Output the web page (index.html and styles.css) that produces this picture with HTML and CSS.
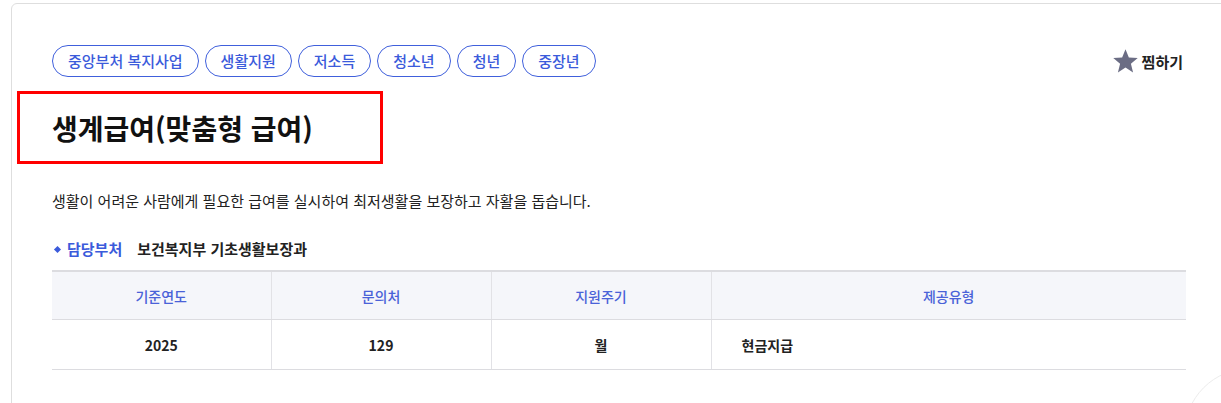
FILE: index.html
```html
<!DOCTYPE html>
<html lang="ko">
<head>
<meta charset="utf-8">
<title>생계급여(맞춤형 급여)</title>
<link rel="stylesheet" href="styles.css">
</head>
<body>
<div class="card">
  <div class="top-row">
    <ul class="tags">
      <li class="tag">중앙부처 복지사업</li>
      <li class="tag">생활지원</li>
      <li class="tag">저소득</li>
      <li class="tag">청소년</li>
      <li class="tag">청년</li>
      <li class="tag">중장년</li>
    </ul>
    <button class="fav" type="button">
      <svg class="star" viewBox="0 0 24 24" width="27" height="26" aria-hidden="true">
        <path d="M12 1.2l3.1 7.6 8.2.5-6.3 5.2 2 8-7-4.4-7 4.4 2-8L.7 9.3l8.2-.5z" fill="#6b6d84"/>
      </svg>
      <span>찜하기</span>
    </button>
  </div>
  <div class="title-wrap">
    <h1 class="title">생계급여(맞춤형 급여)</h1>
    <div class="highlight"></div>
  </div>
  <p class="desc">생활이 어려운 사람에게 필요한 급여를 실시하여 최저생활을 보장하고 자활을 돕습니다.</p>
  <div class="dept">
    <span class="dot"></span>
    <span class="dept-label">담당부처</span>
    <span class="dept-name">보건복지부 기초생활보장과</span>
  </div>
  <table class="info">
    <colgroup>
      <col class="c1"><col class="c2"><col class="c3"><col class="c4">
    </colgroup>
    <thead>
      <tr><th>기준연도</th><th>문의처</th><th>지원주기</th><th>제공유형</th></tr>
    </thead>
    <tbody>
      <tr><td>2025</td><td>129</td><td>월</td><td class="left">현금지급</td></tr>
    </tbody>
  </table>
  <div class="deco"></div>
</div>
</body>
</html>
```

FILE: styles.css
```css
html, body {
  margin: 0;
  padding: 0;
  background: #fff;
}
body {
  overflow: hidden;
  font-family: "Noto Sans CJK KR", "Noto Sans", sans-serif;
  color: #222;
}
.card {
  position: relative;
  margin: 3px 0 0 11px;
  width: 1134px;
  padding: 41px 40px 40px 40px;
  border: 1px solid #dedede;
  border-radius: 6px;
  background: #fff;
}
.top-row {
  display: flex;
  justify-content: space-between;
  align-items: center;
}
.tags {
  display: flex;
  gap: 6px;
  list-style: none;
  margin: 0;
  padding: 0;
}
.tag {
  height: 30px;
  line-height: 29px;
  padding: 0 15px;
  border: 1px solid #4060dc;
  border-radius: 16px;
  color: #3b5bdb;
  font-size: 15px;
  font-weight: 500;
  box-sizing: content-box;
}
.fav {
  display: flex;
  align-items: center;
  gap: 3px;
  margin-right: 3px;
  padding: 0;
  border: 0;
  background: none;
  font-family: inherit;
  font-size: 15px;
  font-weight: 700;
  color: #222;
}
.star { display: block; }
.title-wrap {
  position: relative;
  margin-top: 31px;
}
.title {
  margin: 0;
  font-size: 28px;
  line-height: 40px;
  font-weight: 700;
  color: #111;
}
.highlight {
  position: absolute;
  left: -35px;
  top: -17px;
  width: 360px;
  height: 67px;
  border: 3px solid #f00;
}
.desc {
  margin: 42px 0 0;
  font-size: 15px;
  line-height: 22px;
  color: #222;
}
.dept {
  display: flex;
  align-items: center;
  margin-top: 26px;
  font-size: 15px;
  line-height: 22px;
  font-weight: 700;
}
.dot {
  width: 5px;
  height: 5px;
  margin: 0 7px 0 3px;
  background: #3b5bdb;
  transform: rotate(45deg);
}
.dept-label {
  color: #3b5bdb;
  margin-right: 15px;
}
.dept-name { color: #222; }
.info {
  margin-top: 10px;
  width: 1134px;
  border-collapse: collapse;
  table-layout: fixed;
  font-size: 14px;
}
.c1 { width: 219px; }
.c2 { width: 220px; }
.c3 { width: 220px; }
.c4 { width: 475px; }
.info th, .info td {
  padding: 0;
  text-align: center;
  border-top: 1px solid #dcdce0;
  border-bottom: 1px solid #dcdce0;
  border-left: 1px solid #e2e2e6;
}
.info th:first-child, .info td:first-child { border-left: 0; }
.info th {
  height: 47px;
  background: #f5f6fa;
  color: #4a62d8;
  font-weight: 500;
  border-top: 2px solid #dcdce0;
}
.info td {
  height: 49px;
  font-weight: 700;
  color: #222;
}
.info td.left {
  text-align: left;
  padding-left: 30px;
}
.deco {
  position: absolute;
  right: -90px;
  top: 364px;
  width: 130px;
  height: 130px;
  border: 1px solid #ececec;
  border-radius: 50%;
}
```
